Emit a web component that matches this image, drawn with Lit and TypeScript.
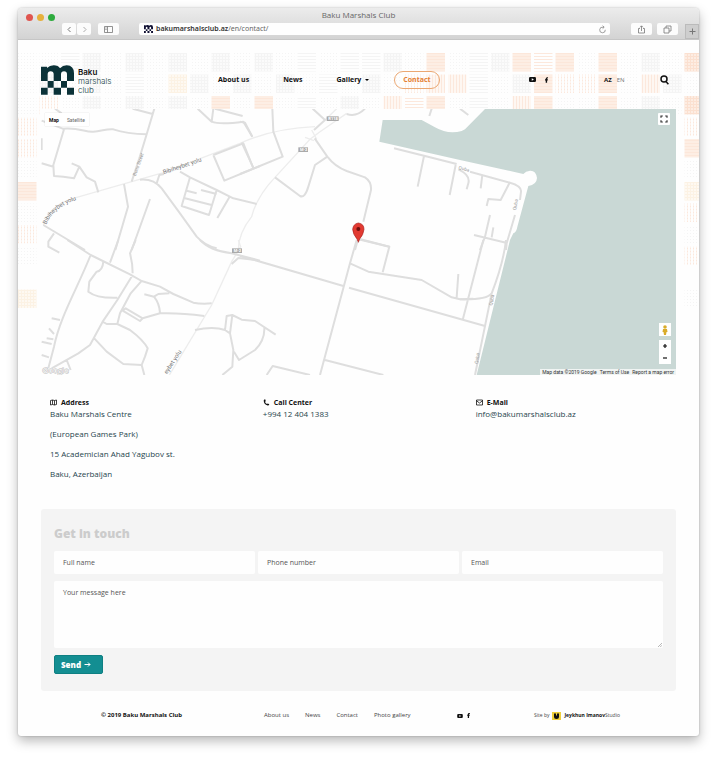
import { LitElement, html, css, svg } from "lit";
import { customElement } from "lit/decorators.js";

const logo = (cls: string) => html`<svg class=${cls} viewBox="0 0 99 88" fill="currentColor" aria-hidden="true">
  <path d="M0 4H18V8Q26 0 38 0Q52 0 57 9Q65 0 77 0Q99 1 99 24V47H78V27Q78 18 69 18Q60 18 60 27V47H38V27Q38 18 29 18Q20 18 20 27V47H0Z" />
  <path d="M20 47H38V67H20ZM60 47H78V67H60ZM0 67H20V88H0ZM38 67H60V88H38ZM78 67H99V88H78Z" />
</svg>`;

const youtube = html`<svg class="yt" viewBox="0 0 14 10" aria-hidden="true">
  <rect width="14" height="10" rx="2.5" fill="#111" /><path d="M5.5 2.6L9.8 5L5.5 7.4Z" fill="#fff" />
</svg>`;
const facebook = html`<svg class="fb" viewBox="0 0 6 11" aria-hidden="true">
  <path d="M1.4 11V6.3H0V4.1H1.4V3Q1.4 0 4.4 0H6V2.2H5Q4.2 2.2 4.2 3V4.1H5.9L5.6 6.3H4.2V11Z" fill="#111" />
</svg>`;

/* One letter per tile: lower case is grey, upper case is orange. */
const tileRows = [
  "ddhvdgdvdvdvdhdhhvdSdhvSHSdSdvdO",
  "dvdvdhdYvdvdvdhdvdDVVhdvSDDSdVvd",
  "dDdvdvdvdSdSdhdvdVHSdhdVSddSdvdO",
  "D..............................D",
  "D..............................S",
  "d..............................d",
  "S..............................Y",
  "d..............................D",
  "D..............................d",
  "d..............................D",
  "................................",
  "Y..............................d",
];

@customElement("marshals-map")
class MarshalsMap extends LitElement {
  static styles = css`
    :host { display: block; position: relative; height: 266px; overflow: hidden; background: #fefefe; font-family: Roboto, "Liberation Sans", sans-serif; }
    .canvas { display: block; width: 100%; height: 100%; }
    .road { fill: none; stroke: #dedede; stroke-width: 6; stroke-linejoin: round; stroke-linecap: butt; }
    .highway { fill: none; stroke: #ededed; stroke-width: 4; }
    .water { fill: #c9d8d5; }
    .street { font: 18px Roboto, sans-serif; fill: #777; }
    .minor { font-size: 14px; fill: #999; }
    .shield { fill: #aaa; }
    .code { font: bold 12px Roboto, sans-serif; fill: #fff; }
    .brand { font: 24px "Open Sans", sans-serif; fill: #fff; stroke: #bbb; stroke-width: 3; paint-order: stroke; }
    .modes, .full, .side, .legal { position: absolute; }
    button { font: inherit; padding: 0; border: 0; background: #fff; color: #111; display: grid; place-items: center; }
    .modes { left: 4px; top: 4px; display: flex; background: #fff; height: 13px; box-shadow: 0 0 1px rgba(0, 0, 0, 0.2); }
    .modes button { font-size: 5px; padding: 0 4px; color: #666; background: none; }
    .modes .on { font-weight: 700; color: #111; }
    .full { right: 6px; top: 4px; width: 12px; height: 12px; border-radius: 1px; }
    .side { right: 5px; bottom: 11px; width: 12px; display: flex; flex-direction: column; }
    .side button { height: 12px; }
    .side .peg { margin-bottom: 4px; height: 13px; }
    .icon { width: 8px; height: 8px; }
    .pegman { width: 6px; height: 10px; }
    .legal { right: 0; bottom: 0; height: 6px; display: flex; gap: 3px; padding: 0 2px; align-items: center; font-size: 5px; line-height: 6px; background: #f0f4f3; color: #333; }
    .legal a { color: inherit; text-decoration: none; }
  `;

  render() {
    return html`
      <svg class="canvas" viewBox="0 0 1905 798" preserveAspectRatio="xMaxYMid slice" role="img" aria-label="Map of Baku Marshals Centre">
        <path class="water" transform="translate(1257 -27)" d="M-232 60H-115L-75 82Q-35 105 5 93L15 88L75 27H700V900H20L50 825L150 420L160 400Q170 395 172 380L205 258Q230 254 231 234Q228 211 210 212Q197 213 190 222L0 180L-242 125Z" />
        <g class="highway">
          <path transform="translate(-33 -27)" d="M40 375Q60 315 130 295L305 245L400 218L630 130Q730 85 855 80M950 40L870 95L840 118L735 232Q680 290 665 350Q625 400 625 450" />
          <path transform="translate(-33 393)" d="M625 0L632 20L605 65L545 195L400 435" />
          <path transform="translate(597 -27)" d="M215 90L230 118M195 112L222 122M290 26L255 60" />
        </g>
        <g class="road">
          <path transform="translate(-33 -27)" d="M308 26L368 42M373 26L350 103L328 175L305 245M75 26L95 40M35 62L98 86C150 82 165 97 190 95S235 85 250 88C280 98 310 102 350 103M102 88L70 195L72 228L100 230L132 235L148 200L125 190M148 200L170 232L195 245L205 277M35 190L70 200M35 115V150M282 252L294 320L256 450M360 297L305 450M40 375L165 450M72 400L55 425V440L88 458M330 239Q370 235 395 265L450 340L500 410Q525 437 560 445M380 250L388 225L402 222M450 215L480 232L560 270L610 295L680 312M480 232L455 318L537 345L560 270M470 272L500 280M465 295L545 315M513 270L560 282M598 292L562 354M550 165L583 242L690 198M550 165L640 130L670 205M503 26L545 65L550 26M555 26L638 48M545 65Q570 75 640 65L667 110" />
          <path transform="translate(-33 393)" d="M112 0L182 45L300 103L335 123L390 140L430 162L490 188Q515 193 545 190M265 0L240 68M317 0L300 40Q308 70 308 100M182 45C140 150 90 230 72 320L55 385M220 65Q218 92 200 95L178 125L175 155Q200 175 262 173M308 105L262 180L218 245L180 315L145 340L65 385M333 125L302 160L270 220L262 252M343 163L372 170L385 162L418 160M372 170Q388 190 390 218M218 245L230 252H262L300 270Q340 300 353 325L345 350L335 375L343 405M190 292L230 335L280 372L335 375M278 212L330 243L338 235L287 205ZM338 235L390 220Q450 218 523 228M495 270Q550 258 585 270L600 280L610 330L607 380L577 405M585 270L590 228L607 225L600 280M607 225L635 239L675 243L737 284M703 262Q705 300 675 330L627 360L612 335M65 235L90 240M57 265L72 282M50 295L70 298M35 305L65 312M35 345L57 352M110 360L122 390M510 0Q540 32 605 40L690 62M605 72L625 54L680 60" />
          <path transform="translate(597 -27)" d="M97 26L100 95L128 170L0 222M0 65L15 68L37 110M5 128L40 203M218 26L255 60L222 90M224 115L262 170Q285 200 320 213L375 232Q395 245 393 270L370 365M262 170L225 195L205 260Q195 295 180 288L105 232M320 42Q350 52 375 26M362 418L448 440M352 425L345 450M462 145L555 168L650 192M552 168L533 260M647 195L629 285M575 26L568 48M660 26L685 45" />
          <path transform="translate(597 393)" d="M0 48L30 56L310 138M327 143L735 258M350 0L330 70L240 405M355 -2L448 20L428 97M330 70L385 95L545 120L635 172L660 178L700 176M655 102L650 172M255 360L430 405M80 405L98 378L210 405" />
          <path transform="translate(1257 -27)" d="M30 215L150 248Q185 258 183 275L180 300M165 345L140 430L138 450M67 225L62 265M-5 208Q32 225 25 250L20 268M148 250L122 300L85 297L80 318M90 345L75 410L60 450M100 382L95 412M42 405L138 428" />
          <path transform="translate(1257 393)" d="M70 0L8 240M138 0Q130 70 95 160L45 405M0 178Q80 180 95 160" />
        </g>
        <path id="old-road" d="M16 347C30 312 56 290 112 270" fill="none" />
        <text class="street"><textPath href="#old-road">Bibiheybet yolu</textPath></text>
        <text class="street" transform="translate(368 196) rotate(-19)">Bibiheybet yolu</text>
        <text class="street" transform="translate(378 796) rotate(-57)">eybet yolu</text>
        <text class="street minor" transform="translate(284 202) rotate(-70)">Bunu Street</text>
        <text class="street minor" transform="translate(1252 180) rotate(15)">Quba</text>
        <text class="street minor" transform="translate(1425 304) rotate(-80)">Quba</text>
        <text class="street minor" transform="translate(1354 590) rotate(-80)">Quba</text>
        <text class="street minor" transform="translate(1310 765) rotate(-80)">Quba</text>
        <g class="shield">
          <rect x="857" y="22" width="36" height="14" /><rect x="772" y="115" width="29" height="14" /><rect x="573" y="418" width="30" height="14" />
        </g>
        <g class="code"><text x="862" y="33">R118</text><text x="777" y="126">M-2</text><text x="578" y="429">M-2</text></g>
        <path d="M952 342Q969 344 969 361Q967 378 956 390L952 400L948 390Q936 376 935 361Q937 344 952 342Z" fill="#e23a31" stroke="#a8201c" stroke-width="2" />
        <circle cx="952" cy="360" r="6" fill="#6f0f0d" />
        <text class="brand" x="4" y="792">Google</text>
      </svg>
      <div class="modes"><button class="on">Map</button><button>Satellite</button></div>
      <button class="full" aria-label="Full screen">
        <svg class="icon" viewBox="0 0 8 8" fill="none" stroke="#333" stroke-width="1.2"><path d="M1 2.8V1H2.8M5.2 1H7V2.8M7 5.2V7H5.2M2.8 7H1V5.2" /></svg>
      </button>
      <div class="side">
        <button class="peg" aria-label="Street view">
          <svg class="pegman" viewBox="0 0 6 10" fill="#d9ac2b"><circle cx="3" cy="2" r="1.8" /><path d="M1 4H5L5.5 7H4.5L4 10H2L1.5 7H.5Z" /></svg>
        </button>
        <button aria-label="Zoom in"><svg class="icon" viewBox="0 0 8 8" stroke="#111" stroke-width="1.2"><path d="M2 4H6M4 2V6" /></svg></button>
        <button aria-label="Zoom out"><svg class="icon" viewBox="0 0 8 8" stroke="#111" stroke-width="1.2"><path d="M2 4H6" /></svg></button>
      </div>
      <div class="legal"><span>Map data ©2019 Google</span><a href="#terms">Terms of Use</a><a href="#report">Report a map error</a></div>
    `;
  }
}

@customElement("app-root")
class AppRoot extends LitElement {
  static styles = css`
    :host { display: block; padding: 8px 18px 25px; font-family: "Open Sans", "Noto Sans", sans-serif; color: #111; background: #fff; }
    * { box-sizing: border-box; }
    a { color: inherit; text-decoration: none; }
    svg { display: block; }
    .window { border-radius: 4px 4px 3px 3px; background: #fefefe; box-shadow: 0 5px 12px rgba(0, 0, 0, 0.28), 0 0 2px rgba(0, 0, 0, 0.25); overflow: hidden; }

    .chrome { height: 32px; background: linear-gradient(#ececec, #d3d3d3); border-bottom: 1px solid #c6c6c6; }
    .titlebar { height: 13px; display: grid; grid-template-columns: 1fr auto 1fr; align-items: end; padding: 0 8px; }
    .lights { display: flex; gap: 4px; }
    .light { width: 7px; height: 7px; border-radius: 50%; background: #e0554f; }
    .light.min { background: #e6b03c; }
    .light.max { background: #2eab3e; }
    .title { font-size: 8px; line-height: 13px; color: #666; }
    .tools { height: 18px; display: flex; align-items: start; padding: 2px 0 0 44px; }
    .tools button { padding: 0; border: 0; height: 12px; width: 21px; border-radius: 2px; background: #fcfcfc; display: grid; place-items: center; color: #777; }
    .history { display: flex; gap: 1px; margin-right: 7px; }
    .tools .history button { width: 14px; }
    .glyph { width: 9px; height: 9px; fill: none; stroke: currentColor; }
    .address { flex: 1; height: 12px; margin: 0 21px 0 20px; padding: 0 3px 0 5px; border-radius: 2px; background: #fefefe; display: flex; align-items: center; gap: 3px; font: 7px/12px "Noto Sans", "Open Sans", sans-serif; color: #666; }
    .address b { color: #333; font-weight: 600; }
    .address .glyph { margin-left: auto; color: #888; }
    .favicon { width: 9px; height: 8px; color: #113; }
    .tools .tabs { margin: 0 7px 0 5px; }
    .tools .plus { width: 14px; height: 15px; margin-top: 1px; border-radius: 0; background: #cecece; border: 1px solid #bbb; }

    .page { position: relative; padding: 0 23px; }
    .tiles { position: absolute; left: 0; top: 13px; width: 100%; height: 258px; }
    .header { position: relative; height: 69px; padding-top: 10px; display: grid; grid-template-columns: 168fr 320fr 75fr 56fr 16fr; align-items: center; font-size: 7px; line-height: 12px; font-weight: 700; }
    .logo { display: flex; gap: 4px; align-items: end; }
    .mark { width: 33px; height: 30px; color: #0b3238; }
    .name { font: 300 8px/8px "Open Sans", sans-serif; color: #173f46; }
    .name { font: 300 8px/9px "Inter", "Open Sans", sans-serif; color: #173f46; }
    .name b { display: block; font-weight: 600; color: #111; }
    .nav { display: flex; gap: 16px; align-items: center; }
    .nav a { padding: 0 9px; height: 18px; line-height: 18px; display: flex; align-items: center; gap: 4px; }
    .nav .active { border: 1px solid #eba873; border-radius: 9px; padding: 0 8px; color: #e58135; }
    .caret { width: 4px; height: 2px; }
    .social { display: flex; gap: 9px; align-items: center; }
    .yt { width: 7px; height: 5px; }
    .fb { width: 3px; height: 6px; }
    .lang { display: flex; gap: 5px; font-size: 6px; }
    .lang a + a { font-weight: 400; color: #777; }
    .header button { padding: 0; border: 0; background: none; width: 9px; height: 10px; }

    .info { display: grid; grid-template-columns: 34fr 34fr 32fr; padding: 22px 0 0 9px; margin: 0; }
    .info h2 { margin: 0; display: flex; gap: 4px; align-items: center; font-size: 7px; line-height: 11px; }
    .info p { margin: 0 0 8px; font-size: 8px; line-height: 12px; color: #1f454d; }
    .info .glyph { width: 7px; height: 7px; }

    .form { margin-top: 21px; padding: 16px 13px 17px; border-radius: 3px; background: #f4f4f4; }
    .form h1 { margin: 0 0 9px; font-size: 12px; line-height: 17px; font-weight: 800; color: #ccc; }
    .fields { display: grid; grid-template-columns: repeat(3, minmax(0, 1fr)); gap: 7px 3px; }
    .fields input, .fields textarea { display: block; width: 100%; border: 0; border-radius: 2px; background: #fefefe; padding: 0 9px; font: 7px/11px "Open Sans", sans-serif; color: #444; outline: 0; }
    .fields input { height: 23px; }
    .fields textarea { height: 67px; padding: 6px 9px; resize: none; }
    .area { grid-column: 1 / -1; position: relative; }
    .grip { position: absolute; right: 1px; bottom: 1px; width: 4px; height: 4px; }
    ::placeholder { color: #555; opacity: 1; }
    .send { margin-top: 7px; padding: 0 6px; width: 49px; height: 19px; border: 1px solid #0e7f82; border-radius: 2px; background: #138e92; color: #fff; font: 800 8px/16px "Open Sans", sans-serif; display: flex; align-items: center; gap: 3px; }
    .send .glyph { width: 7px; height: 7px; }

    .footer { display: grid; grid-template-columns: 163fr 193fr 77fr 142fr; align-items: center; padding: 19px 0 15px 60px; font-size: 6px; line-height: 11px; color: #444; }
    .footer .copy { font-weight: 700; color: #111; }
    .footer nav { display: flex; gap: 16px; }
    .footer .social { gap: 4px; }
    .footer .yt { width: 6px; height: 4px; }
    .footer .fb { width: 3px; height: 5px; }
    .by { display: flex; gap: 3px; align-items: center; font-size: 5px; }
    .by b { color: #111; }
    .studio { width: 9px; height: 8px; }
  `;

  private tile(kind: string, col: number, row: number) {
    if (kind === ".") return null;
    return svg`<rect x=${col * 43} y=${row * 43} width="37" height="37" fill="url(#tile-${kind})" />`;
  }

  private tiles() {
    const grey = "#f4f4f4";
    const orange = "#fce8dc";
    const swatch = (id: string, d: string, color: string, base = "none") => svg`
      <pattern id=${"tile-" + id} width="6" height="6" patternUnits="userSpaceOnUse">
        <rect width="6" height="6" fill=${base} /><path d=${d} stroke=${color} stroke-width="2" fill="none" />
      </pattern>`;
    return html`<svg class="tiles" viewBox="0 0 1362 516" preserveAspectRatio="xMidYMin slice" aria-hidden="true">
      <defs>
        ${swatch("d", "M0 1H2", grey)}
        ${swatch("g", "M1 0V6M0 1H6", grey, "#fbfbfb")}
        ${swatch("v", "M1 0V6M0 1H6", grey, "#fbfbfb")}
        ${swatch("h", "M0 1H6", grey)}
        ${swatch("D", "M0 1H2M0 4H2", orange)}
        ${swatch("V", "M1 0V6", orange, "#fef7f2")}
        ${swatch("H", "M0 1H6", orange)}
        ${swatch("O", "M1 0V6M0 1H6", "#fbe0d0", "#fdede3")}
        ${swatch("S", "M0 1H6", "#fce7da", "#fdeee4")}
        ${swatch("Y", "M0 1H6M1 0V6", "#fcf2e4", "#fef9f2")}
      </defs>
      ${tileRows.map((line, row) => [...line].map((kind, col) => this.tile(kind, col, row)))}
    </svg>`;
  }

  render() {
    return html`
      <div class="window">
        <div class="chrome">
          <div class="titlebar">
            <div class="lights"><span class="light"></span><span class="light min"></span><span class="light max"></span></div>
            <div class="title">Baku Marshals Club</div>
          </div>
          <div class="tools">
            <div class="history">
              <button aria-label="Back"><svg class="glyph" viewBox="0 0 9 9"><path d="M5.5 2L3 4.5L5.5 7" /></svg></button>
              <button aria-label="Forward"><svg class="glyph" viewBox="0 0 9 9" opacity=".6"><path d="M3.5 2L6 4.5L3.5 7" /></svg></button>
            </div>
            <button aria-label="Sidebar"><svg class="glyph" viewBox="0 0 9 9" stroke-width=".8"><path d="M.5 1.5H8.5V7.5H.5ZM3.5 1.5V7.5M1.4 3H2.6M1.4 4.5H2.6" /></svg></button>
            <div class="address">
              ${logo("favicon")}<span><b>bakumarshalsclub.az</b>/en/contact/</span>
              <svg class="glyph" viewBox="0 0 9 9" stroke-width=".8"><path d="M7.3 4.8A2.8 2.8 0 1 1 5 2.2H6M4.6 .7L6.2 2.2L4.6 3.7" /></svg>
            </div>
            <button aria-label="Share"><svg class="glyph" viewBox="0 0 9 9" stroke-width=".8"><path d="M3 3.5H1.5V8H7.5V3.5H6M4.5 6V1M3 2.3L4.5 .8L6 2.3" /></svg></button>
            <button class="tabs" aria-label="Tabs"><svg class="glyph" viewBox="0 0 9 9" stroke-width=".8"><path d="M1 3H6V8H1ZM3 3V1H8V6H6" /></svg></button>
            <button class="plus" aria-label="New tab"><svg class="glyph" viewBox="0 0 9 9"><path d="M1.5 4.5H7.5M4.5 1.5V7.5" /></svg></button>
          </div>
        </div>

        <div class="page">
          ${this.tiles()}
          <header class="header">
            <a class="logo" href="#home">${logo("mark")}<span class="name"><b>Baku</b>marshals<br />club</span></a>
            <nav class="nav">
              <a href="#about">About us</a><a href="#news">News</a>
              <a href="#gallery">Gallery <svg class="caret" viewBox="0 0 4 2"><path d="M0 0H4L2 2Z" /></svg></a>
              <a class="active" href="#contact">Contact</a>
            </nav>
            <div class="social"><a href="#youtube" aria-label="YouTube">${youtube}</a><a href="#facebook" aria-label="Facebook">${facebook}</a></div>
            <div class="lang"><a href="#az">AZ</a><a href="#en">EN</a></div>
            <button aria-label="Search"><svg viewBox="0 0 9 10" fill="none" stroke="#111" stroke-width="1.5"><circle cx="4" cy="4" r="3" /><path d="M6 6.4L8.4 9.2" /></svg></button>
          </header>

          <marshals-map></marshals-map>

          <section class="info">
            <div>
              <h2><svg class="glyph" viewBox="0 0 7 7" stroke-width=".8"><path d="M.5 1.5L2.5 1L4.5 1.5L6.5 1V5.5L4.5 6L2.5 5.5L.5 6ZM2.5 1V5.5M4.5 1.5V6" /></svg>Address</h2>
              <p>Baku Marshals Centre</p><p>(European Games Park)</p><p>15 Academician Ahad Yagubov st.</p><p>Baku, Azerbaijan</p>
            </div>
            <div>
              <h2><svg class="glyph" viewBox="0 0 7 7"><path d="M1.2 .5L2.4 .6L2.7 2.3L2 3Q2.6 4.5 4 5L4.8 4.4L6.3 5.2Q6 6.6 4.7 6.5Q.7 5.5 .7 1.5Z" fill="#111" stroke="none" /></svg>Call Center</h2>
              <p>+994 12 404 1383</p>
            </div>
            <div>
              <h2><svg class="glyph" viewBox="0 0 7 7" stroke-width=".8"><path d="M.5 1H6.5V6H.5ZM.5 1.8L3.5 4L6.5 1.8" /></svg>E-Mail</h2>
              <p>info@bakumarshalsclub.az</p>
            </div>
          </section>

          <form class="form">
            <h1>Get in touch</h1>
            <div class="fields">
              <input aria-label="Full name" placeholder="Full name" />
              <input type="tel" aria-label="Phone number" placeholder="Phone number" />
              <input type="email" aria-label="Email" placeholder="Email" />
              <div class="area">
                <textarea aria-label="Your message here" placeholder="Your message here"></textarea>
                <svg class="grip" viewBox="0 0 4 4" stroke="#999" stroke-width=".7"><path d="M0 4L4 0M2.2 4L4 2.2" /></svg>
              </div>
            </div>
            <button class="send" type="button">Send <svg class="glyph" viewBox="0 0 7 7"><path d="M.5 3.5H6M4 1.5L6 3.5L4 5.5" /></svg></button>
          </form>

          <footer class="footer">
            <span class="copy">© 2019 Baku Marshals Club</span>
            <nav><a href="#about">About us</a><a href="#news">News</a><a href="#contact">Contact</a><a href="#photos">Photo gallery</a></nav>
            <div class="social"><a href="#youtube" aria-label="YouTube">${youtube}</a><a href="#facebook" aria-label="Facebook">${facebook}</a></div>
            <div class="by">Site by
              <svg class="studio" viewBox="0 0 9 8"><rect width="9" height="8" fill="#efcf3c" /><path d="M2 1.5H4V3.5H5V1.5H7V4.5Q7 7 4.5 7Q2 7 2 4.5Z" fill="#111" /></svg>
              <a href="#studio"><b>Jeykhun Imanov</b>Studio</a>
            </div>
          </footer>
        </div>
      </div>
    `;
  }
}
